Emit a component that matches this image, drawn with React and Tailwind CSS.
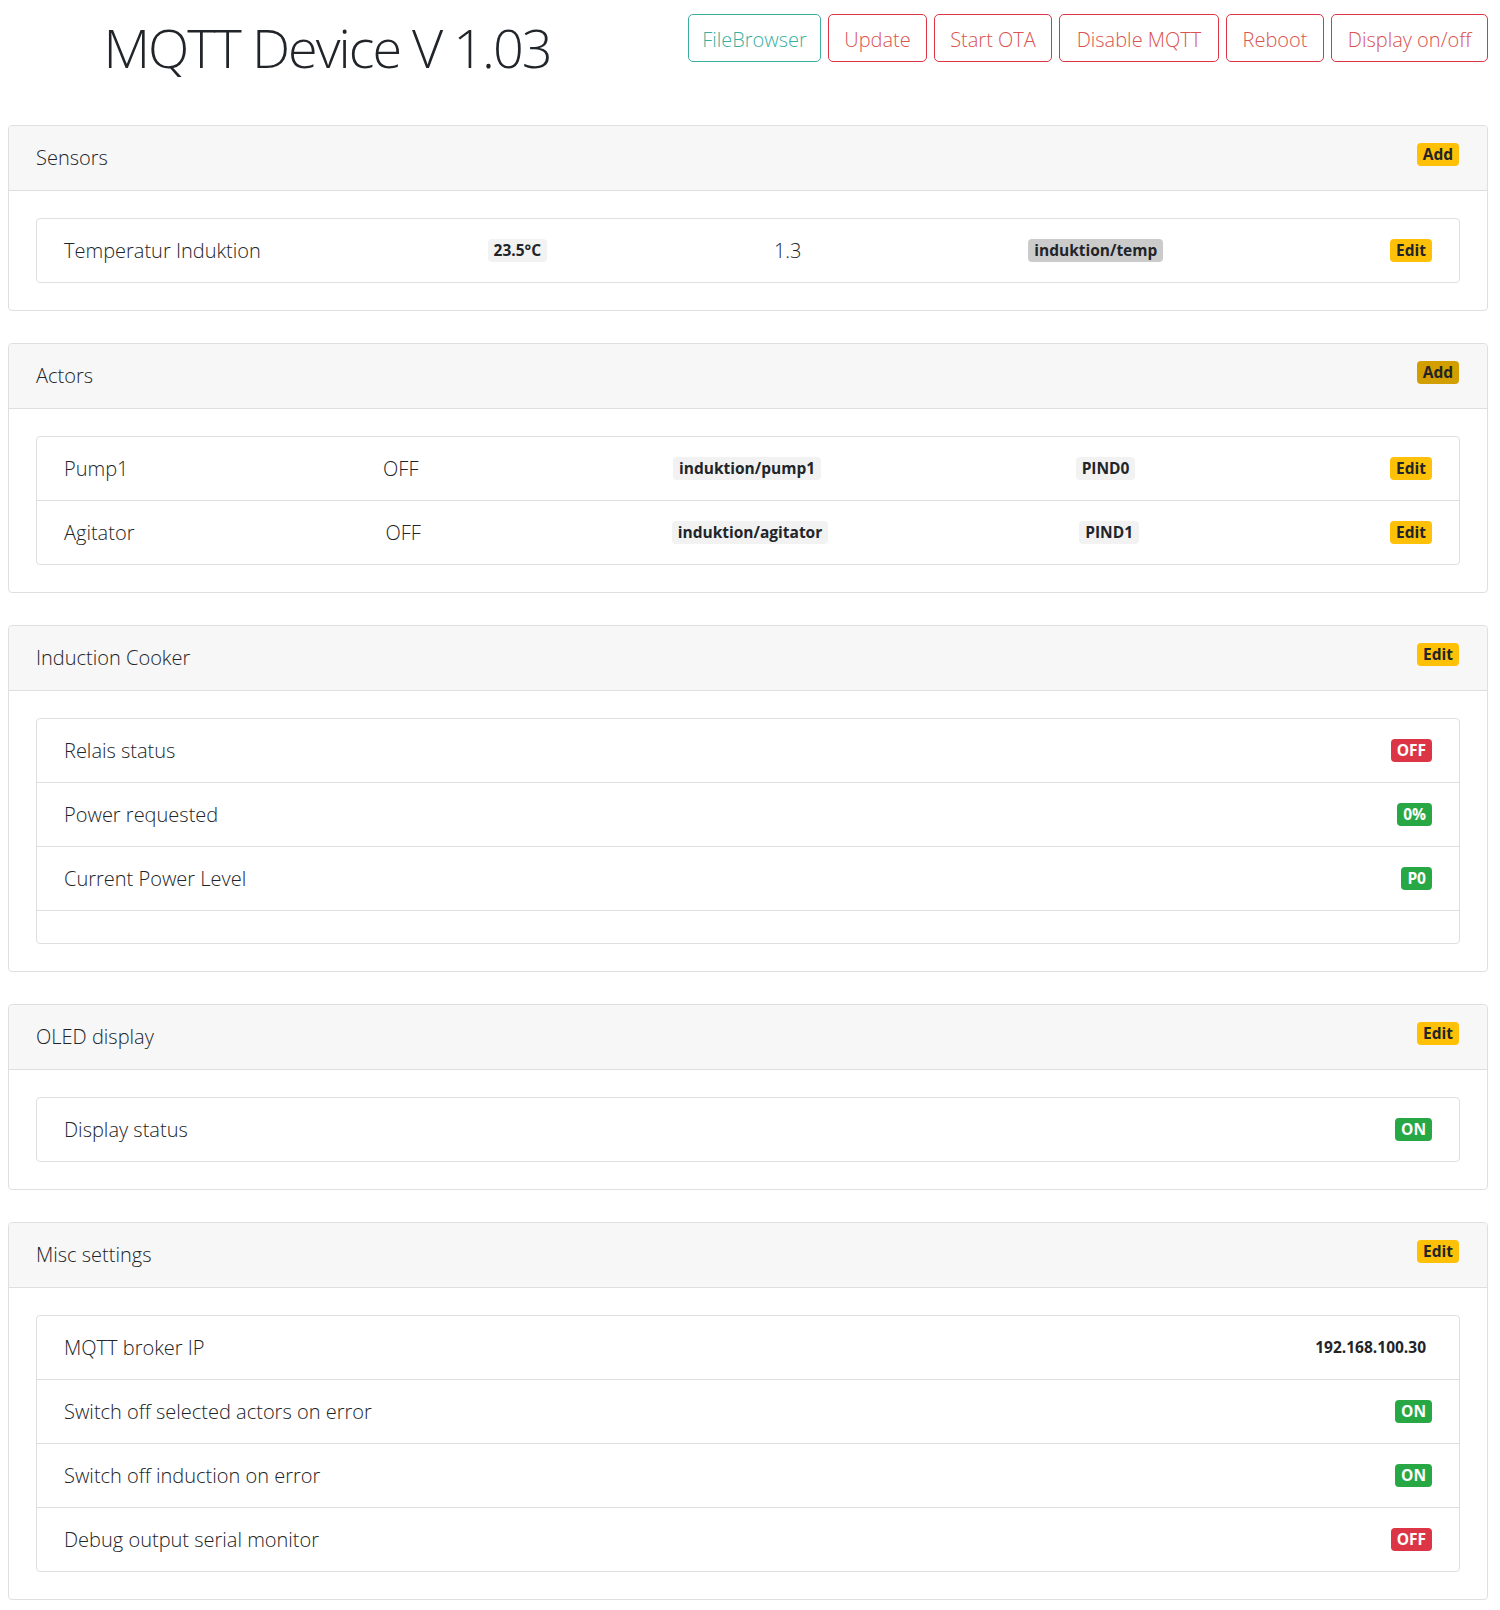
const buttons = [
  { label: "FileBrowser", w: "w-[133px]", tone: "info" },
  { label: "Update", w: "w-[99px]", tone: "danger" },
  { label: "Start OTA", w: "w-[118px]", tone: "danger" },
  { label: "Disable MQTT", w: "w-[160px]", tone: "danger" },
  { label: "Reboot", w: "w-[98px]", tone: "danger" },
  { label: "Display on/off", w: "w-[157px]", tone: "danger" },
];

function Badge({ tone = "warning", children, className = "" }) {
  const tones = {
    warning: "bg-[#ffc107] text-[#212529]",
    warningHover: "bg-[#d39e00] text-[#212529]",
    light: "bg-[#f2f2f2] text-[#212529]",
    gray: "bg-[#cbcbcb] text-[#212529]",
    danger: "bg-[#dc3545] text-white",
    success: "bg-[#28a745] text-white",
    plain: "bg-transparent text-[#212529]",
  };
  return (
    <span
      className={`inline-block rounded-[4px] px-[6px] py-[4px] text-[15.5px] font-bold leading-none whitespace-nowrap ${tones[tone]} ${className}`}
    >
      {children}
    </span>
  );
}

function Card({ title, action, actionTone = "warning", children }) {
  return (
    <div className="mb-[32px] rounded-[4px] border border-[#dfdfdf] bg-white">
      {/* Header */}
      <div className="flex h-[65px] items-center justify-between border-b border-[#dfdfdf] bg-[#f7f7f7] pl-[27px] pr-[28px] rounded-t-[4px]">
        <span className="text-[20px] font-light text-[#212529]">{title}</span>
        <Badge tone={actionTone} className="mb-[7px]">
          {action}
        </Badge>
      </div>
      <div className="p-[27px]">
        <div className="rounded-[4px] border border-[#dfdfdf]">{children}</div>
      </div>
    </div>
  );
}

function Row({ children, first }) {
  return (
    <div
      className={`flex items-center justify-between px-[27px] py-[16px] text-[20px] leading-[31px] font-light text-[#212529] ${
        first ? "" : "border-t border-[#dfdfdf]"
      }`}
    >
      {children}
    </div>
  );
}

export default function App() {
  return (
    <div className="min-h-[1610px] bg-white pl-[8px] pr-[12px] font-['Open_Sans',sans-serif] text-[#212529]">
      {/* Top bar */}
      <div className="flex items-start justify-between pt-[14px]">
        <div className="w-[638px] text-center">
          <h1 className="text-[54px] font-light leading-[67px] tracking-[-2px] text-[#212529]">MQTT Device V 1.03</h1>
        </div>
        <div className="flex gap-[7px]">
          {buttons.map((b) => (
            <button
              key={b.label}
              className={`${b.w} h-[48px] rounded-[5px] border pt-[3px] text-[20px] font-light whitespace-nowrap ${
                b.tone === "info"
                  ? "border-[#3aaf9f] text-[#38b0a0]"
                  : "border-[#dc3545] text-[#d9534f]"
              }`}
            >
              {b.label}
            </button>
          ))}
        </div>
      </div>

      <div className="mt-[44px]">
        <Card title="Sensors" action="Add">
          <Row first>
            <span>Temperatur Induktion</span>
            <Badge tone="light">23.5°C</Badge>
            <span>1.3</span>
            <Badge tone="gray">induktion/temp</Badge>
            <Badge>Edit</Badge>
          </Row>
        </Card>

        <Card title="Actors" action="Add" actionTone="warningHover">
          <Row first>
            <span>Pump1</span>
            <span>OFF</span>
            <Badge tone="light">induktion/pump1</Badge>
            <Badge tone="light">PIND0</Badge>
            <Badge>Edit</Badge>
          </Row>
          <Row>
            <span>Agitator</span>
            <span>OFF</span>
            <Badge tone="light">induktion/agitator</Badge>
            <Badge tone="light">PIND1</Badge>
            <Badge>Edit</Badge>
          </Row>
        </Card>

        <Card title="Induction Cooker" action="Edit">
          <Row first>
            <span>Relais status</span>
            <Badge tone="danger">OFF</Badge>
          </Row>
          <Row>
            <span>Power requested</span>
            <Badge tone="success">0%</Badge>
          </Row>
          <Row>
            <span>Current Power Level</span>
            <Badge tone="success">P0</Badge>
          </Row>
          <div className="h-[33px] border-t border-[#dfdfdf]" />
        </Card>

        <Card title="OLED display" action="Edit">
          <Row first>
            <span>Display status</span>
            <Badge tone="success">ON</Badge>
          </Row>
        </Card>

        <Card title="Misc settings" action="Edit">
          <Row first>
            <span>MQTT broker IP</span>
            <Badge tone="plain">192.168.100.30</Badge>
          </Row>
          <Row>
            <span>Switch off selected actors on error</span>
            <Badge tone="success">ON</Badge>
          </Row>
          <Row>
            <span>Switch off induction on error</span>
            <Badge tone="success">ON</Badge>
          </Row>
          <Row>
            <span>Debug output serial monitor</span>
            <Badge tone="danger">OFF</Badge>
          </Row>
        </Card>
      </div>
    </div>
  );
}
